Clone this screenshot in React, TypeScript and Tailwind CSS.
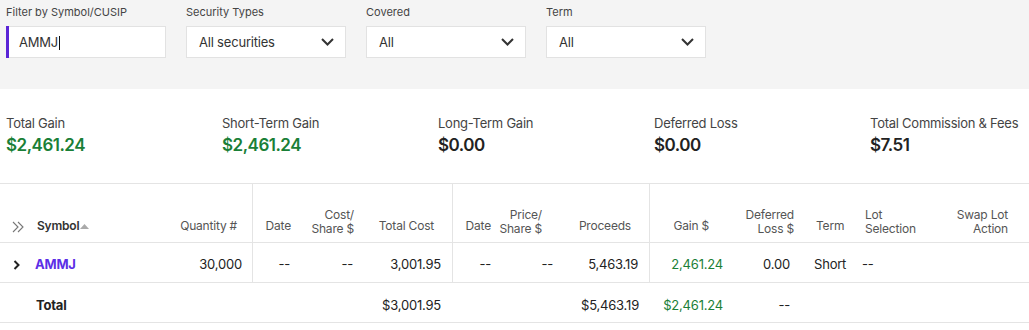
import React from "react";

const FONT = { fontFamily: "Inter, 'Noto Sans', Arial, sans-serif" };

function Chevron() {
  return (
    <svg width="13" height="8" viewBox="0 0 13 8" fill="none">
      <path d="M1 1l5.5 5.5L12 1" stroke="#333" strokeWidth="2" />
    </svg>
  );
}

function SelectBox({ value }: { value: string }) {
  return (
    <div className="flex h-[32px] w-[160px] items-center justify-between border border-[#e2e2e2] bg-white pl-[12px] pr-[11px]">
      <span className="pt-[2px] text-[13px] tracking-[-0.2px] text-[#333]">{value}</span>
      <Chevron />
    </div>
  );
}

function Field({ label, children }: { label: string; children: React.ReactNode }) {
  return (
    <div className="flex flex-col gap-[7px]">
      <span className="text-[11px] leading-[14px] text-[#444]">{label}</span>
      {children}
    </div>
  );
}

function Stat({ label, value, green }: { label: string; value: string; green?: boolean }) {
  return (
    <div className="flex w-[216px] shrink-0 flex-col gap-[3px]">
      <span className="whitespace-nowrap text-[13px] leading-[16px] tracking-[-0.25px] text-[#444]">{label}</span>
      <span
        className={`text-[17px] font-semibold leading-[22px] tracking-[-0.5px] ${green ? "text-[#1a7f37]" : "text-[#222]"}`}
      >
        {value}
      </span>
    </div>
  );
}

const COLS = "grid grid-cols-[30px_130px_92px_48px_62px_90px_48px_60px_89px_84px_67px_55px_85px_89px]";

function DoubleChevron() {
  return (
    <svg width="12" height="12" viewBox="0 0 12 12" fill="none">
      <path d="M1 1l5 5-5 5M6 1l5 5-5 5" stroke="#777" strokeWidth="1.1" />
    </svg>
  );
}

function RowChevron() {
  return (
    <svg width="8" height="10" viewBox="0 0 8 10" fill="none">
      <path d="M1.5 1l4 4-4 4" stroke="#222" strokeWidth="2" />
    </svg>
  );
}

export default function App() {
  const h1 = "flex items-end whitespace-nowrap pb-[9px] text-[12px] leading-[14px] tracking-[-0.2px] text-[#555]";
  const h2 = "flex items-end whitespace-nowrap pb-[6px] text-[12px] leading-[14px] tracking-[-0.2px] text-[#555]";
  const d = "flex items-center whitespace-nowrap pt-[4px] text-[13px] tracking-[-0.2px]";
  const t = "flex items-center whitespace-nowrap pt-[6px] text-[13px] tracking-[-0.2px]";
  return (
    <div className="w-[1029px] overflow-hidden bg-white" style={FONT}>
      <div className="flex h-[89px] gap-[20px] bg-[#f4f4f4] pl-[6px] pt-[5px]">
        <Field label="Filter by Symbol/CUSIP">
          <div className="flex h-[32px] w-[160px] items-center border border-l-0 border-[#e2e2e2] bg-white">
            <div className="h-[32px] w-[3px] bg-[#5a24d6]" />
            <span className="pl-[10px] pt-[2px] text-[13px] tracking-[-0.2px] text-[#333]">AMMJ</span>
            <span className="ml-[1px] mt-[2px] h-[14px] w-px bg-[#111]" />
          </div>
        </Field>
        <Field label="Security Types">
          <SelectBox value="All securities" />
        </Field>
        <Field label="Covered">
          <SelectBox value="All" />
        </Field>
        <Field label="Term">
          <SelectBox value="All" />
        </Field>
      </div>

      <div className="flex h-[95px] border-b border-[#e4e4e4] pl-[6px] pt-[26px]">
        <Stat label="Total Gain" value="$2,461.24" green />
        <Stat label="Short-Term Gain" value="$2,461.24" green />
        <Stat label="Long-Term Gain" value="$0.00" />
        <Stat label="Deferred Loss" value="$0.00" />
        <Stat label="Total Commission & Fees" value="$7.51" />
      </div>

      <div className={`${COLS} h-[59px] border-b border-[#e4e4e4]`}>
        <div className="flex items-end justify-end pb-[9px] pr-[6px]">
          <DoubleChevron />
        </div>
        <div className="flex items-end pb-[9px] pl-[7px] text-[12px] font-semibold leading-[14px] tracking-[-0.2px] text-[#333]">
          Symbol
          <svg width="9" height="6" viewBox="0 0 9 6" className="mb-[4px] ml-[1px]">
            <path d="M0 6L4.5 1 9 6z" fill="#aaa" />
          </svg>
        </div>
        <div className={`${h1} justify-end pr-[15px]`}>Quantity #</div>
        <div className={`${h1} justify-end border-l border-[#e4e4e4] pr-[9px]`}>Date</div>
        <div className={`${h2} justify-end pr-[8px] text-right`}>Cost/<br />Share $</div>
        <div className={`${h1} justify-end pr-[18px]`}>Total Cost</div>
        <div className={`${h1} justify-end border-l border-[#e4e4e4] pr-[9px]`}>Date</div>
        <div className={`${h2} justify-end pr-[18px] text-right`}>Price/<br />Share $</div>
        <div className={`${h1} justify-end pr-[18px]`}>Proceeds</div>
        <div className={`${h1} justify-end border-l border-[#e4e4e4] pr-[24px]`}>Gain $</div>
        <div className={`${h2} justify-end pr-[6px] text-right`}>Deferred<br />Loss $</div>
        <div className={`${h1} pl-[16px]`}>Term</div>
        <div className={`${h2} pl-[10px]`}>Lot<br />Selection</div>
        <div className={`${h2} justify-end pr-[21px] text-right`}>Swap Lot<br />Action</div>
      </div>

      <div className={`${COLS} h-[40px] border-b border-[#e4e4e4] text-[#222]`}>
        <div className="flex items-center justify-end pr-[9px] pt-[4px]">
          <RowChevron />
        </div>
        <div className={`${d} pl-[5px] font-bold text-[#5c2ee6]`}>AMMJ</div>
        <div className={`${d} justify-end pr-[10px]`}>30,000</div>
        <div className={`${d} justify-end border-l border-[#e4e4e4] pr-[10px]`}>--</div>
        <div className={`${d} justify-end pr-[9px]`}>--</div>
        <div className={`${d} justify-end pr-[11px]`}>3,001.95</div>
        <div className={`${d} justify-end border-l border-[#e4e4e4] pr-[9px]`}>--</div>
        <div className={`${d} justify-end pr-[7px]`}>--</div>
        <div className={`${d} justify-end pr-[11px]`}>5,463.19</div>
        <div className={`${d} justify-end border-l border-[#e4e4e4] pr-[10px] text-[#1a7f37]`}>2,461.24</div>
        <div className={`${d} justify-end pr-[10px]`}>0.00</div>
        <div className={`${d} pl-[14px]`}>Short</div>
        <div className={`${d} pl-[7px]`}>--</div>
        <div />
      </div>

      <div className={`${COLS} h-[40px] border-b border-[#e4e4e4] text-[#222]`}>
        <div />
        <div className={`${t} pl-[6px] font-bold`}>Total</div>
        <div />
        <div />
        <div />
        <div className={`${t} justify-end pr-[11px]`}>$3,001.95</div>
        <div />
        <div />
        <div className={`${t} justify-end pr-[10px]`}>$5,463.19</div>
        <div className={`${t} justify-end pr-[10px] text-[#1a7f37]`}>$2,461.24</div>
        <div className={`${t} justify-end pr-[10px]`}>--</div>
        <div />
        <div />
        <div />
      </div>
    </div>
  );
}
